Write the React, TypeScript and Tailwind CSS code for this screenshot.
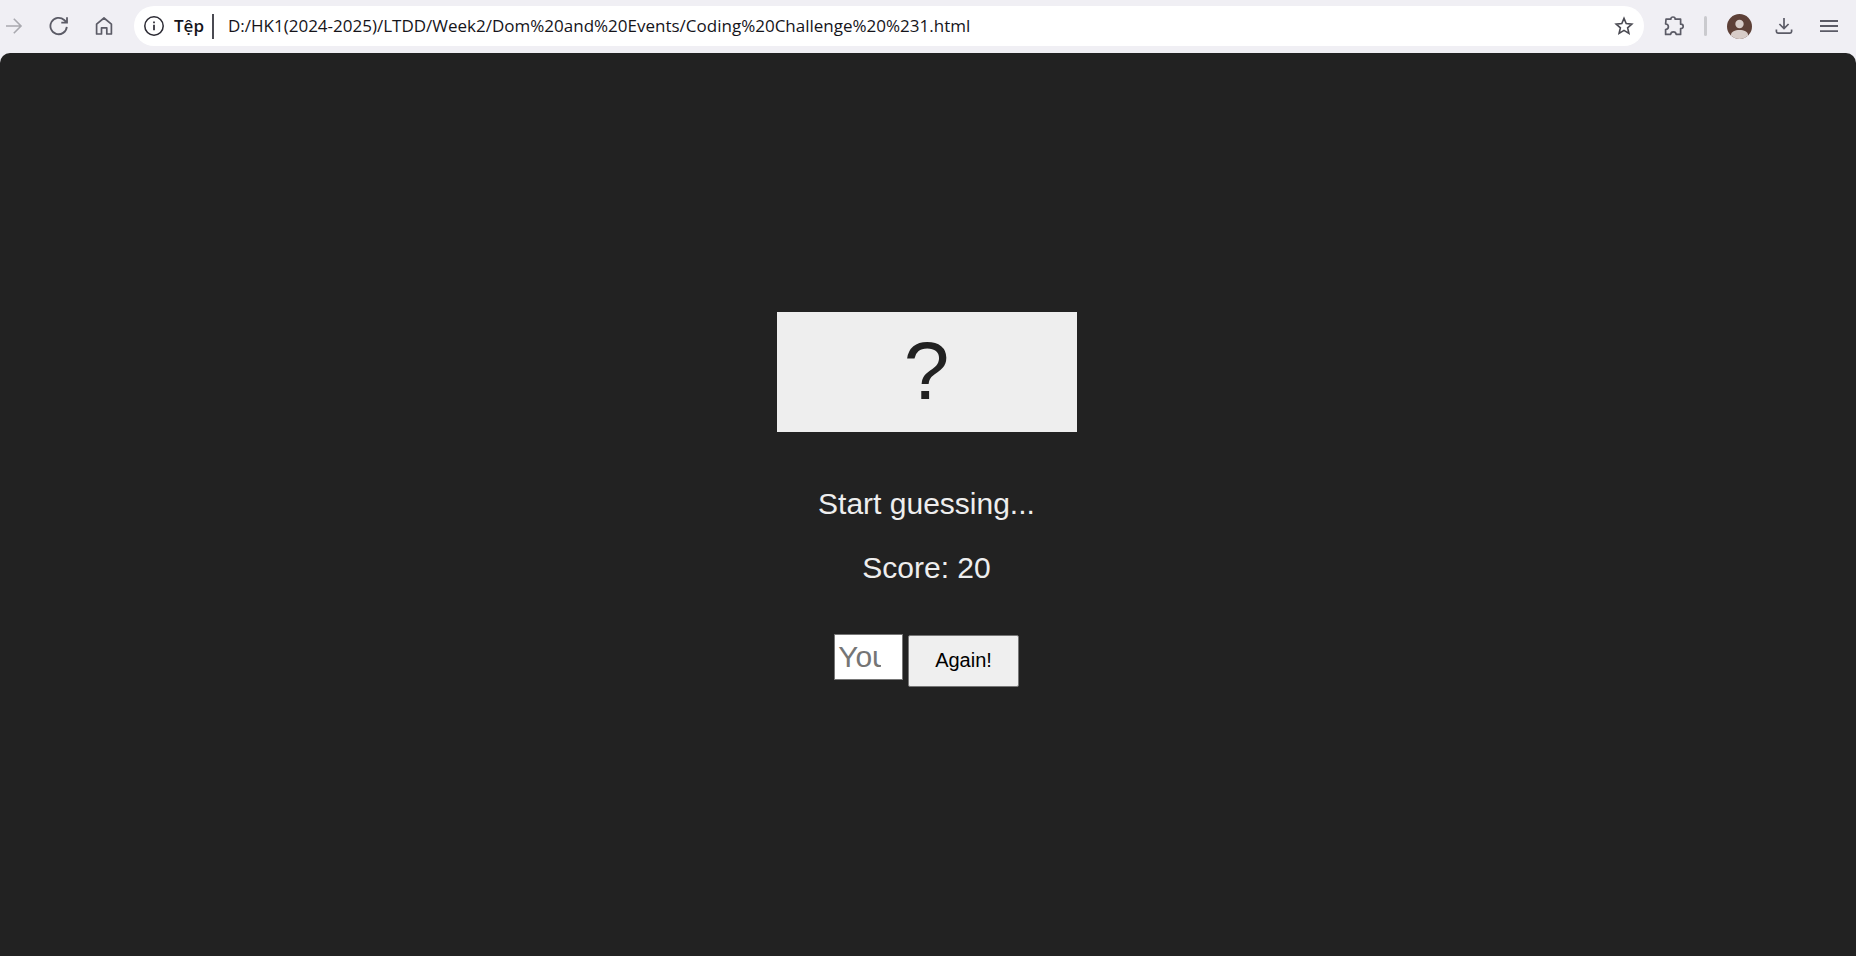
import { useState } from "react";

const path = "D:/HK1(2024-2025)/LTDD/Week2/Dom%20and%20Events/Coding%20Challenge%20%231.html";

function Toolbar() {
  return (
    <header className="flex h-[53px] shrink-0 items-center bg-[#f0eff4] pb-px pl-[5px] pr-[17px] text-[#5b5b66]">
      <button type="button" disabled aria-label="Forward" className="text-[#a9a9af]">
        <svg className="block size-5" viewBox="0 0 20 20" fill="none" stroke="currentColor" strokeWidth="1.6">
          <path d="M1 10H16.2M8.8 2.8L16 10L8.8 17.2" />
        </svg>
      </button>
      <button type="button" aria-label="Reload" className="ml-6">
        <svg className="block size-5" viewBox="0 0 20 20" fill="none" stroke="currentColor" strokeWidth="1.8">
          <path d="M17.8 10.8A8.2 8.2 0 1 1 15.2 4L17.8 6.4M18 1.2V6.6H12.3" />
        </svg>
      </button>
      <button type="button" aria-label="Home" className="ml-[25px]">
        <svg className="block size-5" viewBox="0 0 20 20" fill="none" stroke="currentColor" strokeWidth="1.7">
          <path d="M2.6 8.2L10 2L17.4 8.2V18H12.8V11.8H7.5V18H2.6Z" strokeLinejoin="round" />
        </svg>
      </button>
      <div className="ml-5 flex h-10 min-w-0 flex-1 items-center rounded-full bg-white pl-2.5 pr-2.5 font-['Noto_Sans','Open_Sans',sans-serif] text-[17px] leading-6 text-[#15141a]">
        <svg className="block size-5 shrink-0 text-[#2b2a33]" viewBox="0 0 20 20" fill="none" stroke="currentColor" strokeWidth="1.5">
          <circle cx="10" cy="10" r="9.2" />
          <path d="M10 8.8V14.2M10 5.6V7.2" strokeWidth="1.7" />
        </svg>
        <span className="ml-2.5 font-['Open_Sans','Noto_Sans',sans-serif] font-semibold">Tệp</span>
        <span className="ml-2 h-[25px] w-0.5 bg-[#4a4a52]" />
        <input aria-label="Address" readOnly value={path} className="ml-3.5 min-w-0 flex-1 bg-transparent font-['Open_Sans','Noto_Sans',sans-serif] outline-none" />
        <button type="button" aria-label="Bookmark this page" className="text-[#4a4a52]">
          <svg className="block size-5" viewBox="0 0 20 20" fill="none" stroke="currentColor" strokeWidth="1.6">
            <path d="M10 2.4L12.2 7.6L17.8 8.1L13.6 11.8L14.9 17.4L10 14.4L5.1 17.4L6.4 11.8L2.2 8.1L7.8 7.6Z" />
          </svg>
        </button>
      </div>
      <button type="button" aria-label="Extensions" className="ml-5">
        <svg className="block size-5" viewBox="0 0 20 20" fill="none" stroke="currentColor" strokeWidth="1.7" strokeLinejoin="round">
          <path d="M2 3.2H6.8C6.8 1.8 7.8 1 9 1S11.2 1.8 11.2 3.2H16.6V8.2C18.2 8.2 19.2 9.2 19.2 10.4S18.2 12.6 16.6 12.6V18.4H12.2C12 16.6 10.8 15.8 9.4 15.8S6.8 16.6 6.6 18.4H1.6V13.6C3.6 13.4 4.4 12.2 4.4 10.8S3.6 8.2 1.6 8Z" />
        </svg>
      </button>
      <span className="ml-5 h-5 w-[3px] rounded-full bg-[#cacace]" />
      <button type="button" aria-label="Profile" className="ml-5">
        <svg className="block size-[25px]" viewBox="0 0 25 25">
          <clipPath id="avatar"><circle cx="12.5" cy="12.5" r="12.5" /></clipPath>
          <g clipPath="url(#avatar)">
            <rect width="25" height="25" fill="#5d4037" />
            <circle cx="12.5" cy="10" r="4.2" fill="#d7ccc8" />
            <path d="M4 25V21C4 17.5 8 16 12.5 16S21 17.5 21 21V25Z" fill="#d7ccc8" />
          </g>
        </svg>
      </button>
      <button type="button" aria-label="Downloads" className="ml-[22px]">
        <svg className="block size-5" viewBox="0 0 20 20" fill="none" stroke="currentColor" strokeWidth="1.7">
          <path d="M10 2V12.4M5.4 8L10 12.6L14.6 8M2.4 13.4V15.6Q2.4 17.2 4 17.2H16Q17.6 17.2 17.6 15.6V13.4" />
        </svg>
      </button>
      <button type="button" aria-label="Menu" className="ml-[25px]">
        <svg className="block size-5" viewBox="0 0 20 20" fill="none" stroke="currentColor" strokeWidth="1.8">
          <path d="M1 5H19M1 10H19M1 15.2H19" />
        </svg>
      </button>
    </header>
  );
}

export default function App() {
  const [guess, setGuess] = useState("");
  return (
    <div className="flex min-h-screen flex-col bg-[#f0eff4]">
      <Toolbar />
      <main className="flex flex-1 flex-col items-center justify-center rounded-t-[10px] bg-[#222] pb-2.5 pr-[3px] font-['Liberation_Sans',Arial,sans-serif] text-[#eee]">
        <div className="flex h-[120px] w-[300px] items-center justify-center bg-[#eee] pb-0.5 text-[82px] leading-none text-[#222]">?</div>
        <p className="mt-[55px] text-[30px] leading-[34px]">Start guessing...</p>
        <p className="mt-[30px] text-[30px] leading-[34px]">Score: 20</p>
        <form className="mt-[49px] flex items-start gap-[5px]" onSubmit={(e) => e.preventDefault()}>
          <input
            type="number"
            aria-label="Guess"
            placeholder="You"
            value={guess}
            onChange={(e) => setGuess(e.target.value)}
            className="h-[46px] w-[69px] border border-[#767676] bg-white pl-[3px] pr-1.5 text-[30px] leading-[34px] text-black placeholder:text-[#757575]"
          />
          <button
            type="reset"
            onClick={() => setGuess("")}
            className="mt-px h-[52px] rounded-xs border border-[#767676] bg-[#efefef] px-[26px] pb-0.5 text-xl leading-6 text-black"
          >
            Again!
          </button>
        </form>
      </main>
    </div>
  );
}
